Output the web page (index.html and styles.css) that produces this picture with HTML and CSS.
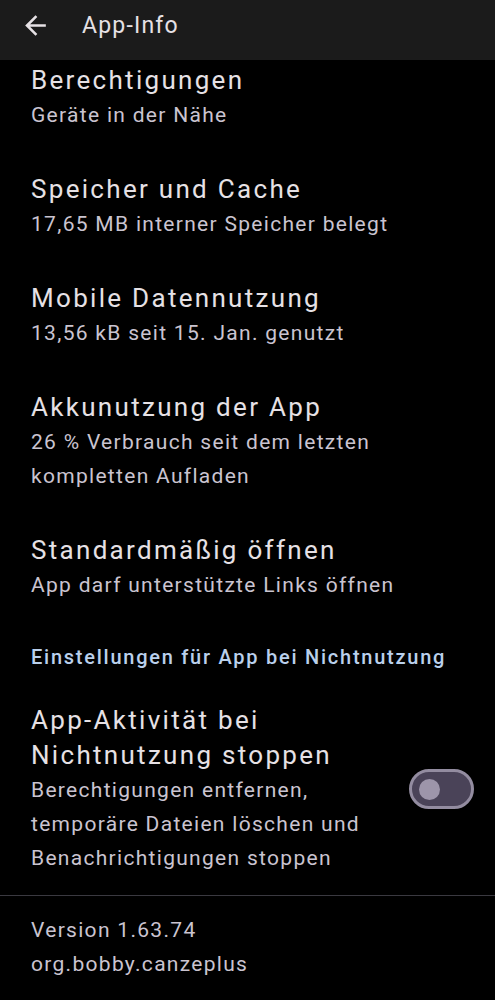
FILE: index.html
```html
<!DOCTYPE html>
<html lang="de">
<head>
  <meta charset="UTF-8">
  <title>App-Info</title>
  <link rel="stylesheet" href="styles.css">
</head>
<body>

  <div class="topbar">
    <svg class="back" viewBox="0 0 24 24" width="31" height="31">
      <path d="M20 11H7.83l5.59-5.59L12 4l-8 8 8 8 1.41-1.41L7.83 13H20v-2z" fill="#e6e1e5"/>
    </svg>
    <span class="title">App-Info</span>
  </div>

  <div class="list">
    <div class="item first">
      <div class="item-title">Berechtigungen</div>
      <div class="item-sub">Geräte in der Nähe</div>
    </div>
    <div class="item">
      <div class="item-title">Speicher und Cache</div>
      <div class="item-sub">17,65 MB interner Speicher belegt</div>
    </div>
    <div class="item">
      <div class="item-title">Mobile Datennutzung</div>
      <div class="item-sub">13,56 kB seit 15. Jan. genutzt</div>
    </div>
    <div class="item">
      <div class="item-title">Akkunutzung der App</div>
      <div class="item-sub">26 % Verbrauch seit dem letzten kompletten Aufladen</div>
    </div>
    <div class="item">
      <div class="item-title">Standardmäßig öffnen</div>
      <div class="item-sub">App darf unterstützte Links öffnen</div>
    </div>

    <div class="section">Einstellungen für App bei Nichtnutzung</div>

    <div class="item toggle-row">
      <div class="item-text">
        <div class="item-title">App-Aktivität bei Nichtnutzung stoppen</div>
        <div class="item-sub">Berechtigungen entfernen, temporäre Dateien löschen und Benachrichtigungen stoppen</div>
      </div>
      <div class="switch"><span class="thumb"></span></div>
    </div>

    <div class="footer">
      <div class="item-sub">Version 1.63.74</div>
      <div class="item-sub">org.bobby.canzeplus</div>
    </div>
  </div>

</body>
</html>
```

FILE: styles.css
```css
body {
  margin: 0;
  background-color: #000;
  font-family: Roboto, 'Noto Sans', sans-serif;
  color: #e6e1e5;
}
.topbar {
  height: 60px;
  background-color: #1b1b1b;
  display: flex;
  align-items: center;
}
.back {
  margin-left: 20px;
  margin-top: -10px;
}
.title {
  margin-left: 31px;
  margin-top: -10px;
  font-size: 23px;
  letter-spacing: 1.2px;
}
.item {
  padding: 20px 31px;
}
.item.first {
  padding-top: 3px;
}
.item-title {
  font-size: 26px;
  line-height: 35px;
  letter-spacing: 2.3px;
  color: #e6e1e5;
}
.item-sub {
  font-size: 21px;
  line-height: 34px;
  letter-spacing: 1.3px;
  color: #cac4d0;
}
.section {
  padding: 22px 31px 13px;
  font-size: 20px;
  line-height: 26px;
  font-weight: 500;
  letter-spacing: 1.75px;
  color: #bad0ec;
}
.toggle-row {
  display: flex;
  align-items: center;
  gap: 24px;
  padding-right: 21px;
}
.item-text {
  flex: 1;
}
.switch {
  width: 59px;
  height: 34px;
  border: 3px solid #938ca0;
  border-radius: 20px;
  background-color: #4a4358;
  display: flex;
  align-items: center;
  flex-shrink: 0;
}
.thumb {
  width: 21px;
  height: 21px;
  margin-left: 7px;
  border-radius: 50%;
  background-color: #9d95aa;
}
.footer {
  border-top: 1px solid #3a3940;
  padding: 17px 31px;
}
```
